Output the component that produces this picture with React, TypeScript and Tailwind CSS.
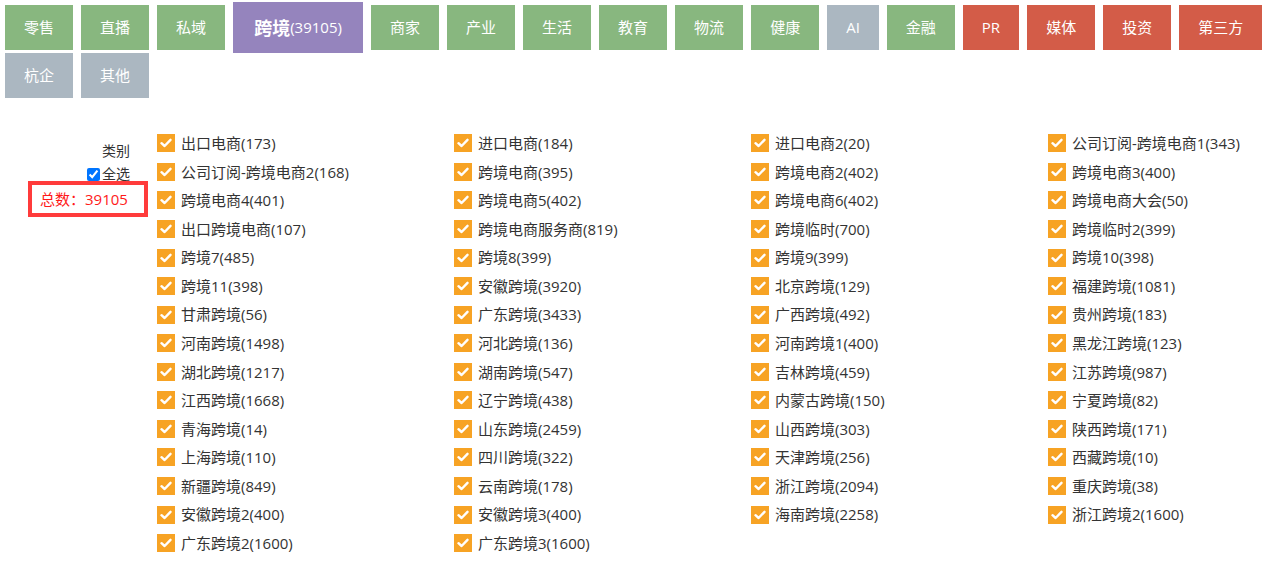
import React from "react";

type Btn = { label: string; color: "green" | "gray" | "red" };

const buttons: Btn[] = [
  { label: "零售", color: "green" },
  { label: "直播", color: "green" },
  { label: "私域", color: "green" },
  { label: "__active__", color: "green" },
  { label: "商家", color: "green" },
  { label: "产业", color: "green" },
  { label: "生活", color: "green" },
  { label: "教育", color: "green" },
  { label: "物流", color: "green" },
  { label: "健康", color: "green" },
  { label: "AI", color: "gray" },
  { label: "金融", color: "green" },
  { label: "PR", color: "red" },
  { label: "媒体", color: "red" },
  { label: "投资", color: "red" },
  { label: "第三方", color: "red" },
  { label: "杭企", color: "gray" },
  { label: "其他", color: "gray" },
];

const colorClass: Record<Btn["color"], string> = {
  green: "bg-[#88b77f]",
  gray: "bg-[#abb7c1]",
  red: "bg-[#d35c48]",
};

const items = [
  "出口电商(173)", "进口电商(184)", "进口电商2(20)", "公司订阅-跨境电商1(343)",
  "公司订阅-跨境电商2(168)", "跨境电商(395)", "跨境电商2(402)", "跨境电商3(400)",
  "跨境电商4(401)", "跨境电商5(402)", "跨境电商6(402)", "跨境电商大会(50)",
  "出口跨境电商(107)", "跨境电商服务商(819)", "跨境临时(700)", "跨境临时2(399)",
  "跨境7(485)", "跨境8(399)", "跨境9(399)", "跨境10(398)",
  "跨境11(398)", "安徽跨境(3920)", "北京跨境(129)", "福建跨境(1081)",
  "甘肃跨境(56)", "广东跨境(3433)", "广西跨境(492)", "贵州跨境(183)",
  "河南跨境(1498)", "河北跨境(136)", "河南跨境1(400)", "黑龙江跨境(123)",
  "湖北跨境(1217)", "湖南跨境(547)", "吉林跨境(459)", "江苏跨境(987)",
  "江西跨境(1668)", "辽宁跨境(438)", "内蒙古跨境(150)", "宁夏跨境(82)",
  "青海跨境(14)", "山东跨境(2459)", "山西跨境(303)", "陕西跨境(171)",
  "上海跨境(110)", "四川跨境(322)", "天津跨境(256)", "西藏跨境(10)",
  "新疆跨境(849)", "云南跨境(178)", "浙江跨境(2094)", "重庆跨境(38)",
  "安徽跨境2(400)", "安徽跨境3(400)", "海南跨境(2258)", "浙江跨境2(1600)",
  "广东跨境2(1600)", "广东跨境3(1600)",
];

const font = "font-['Open_Sans','Noto_Sans_CJK_SC',sans-serif]";

function Check() {
  return (
    <span className="flex h-[18px] w-[18px] shrink-0 items-center justify-center bg-[#f7a324]">
      <svg width="12" height="10" viewBox="0 0 12 10" fill="none">
        <path d="M1.5 5.2 L4.6 8 L10.5 1.8" stroke="white" strokeWidth="2.4" strokeLinecap="round" strokeLinejoin="round" />
      </svg>
    </span>
  );
}

export default function App() {
  return (
    <div className={`${font} min-h-[566px] bg-white text-[#333]`}>
      <div className="flex flex-wrap items-center gap-x-[8px] pl-[5px] pt-[2px]">
        {buttons.map((b, i) =>
          b.label === "__active__" ? (
            <div
              key={i}
              className="flex h-[51px] w-[130px] items-center justify-center bg-[#9584bd] text-white"
            >
              <span className="text-[18px] font-bold leading-none">跨境</span>
              <span className="text-[15px] leading-none">(39105)</span>
            </div>
          ) : (
            <div
              key={i}
              className={`flex h-[45px] items-center justify-center px-[19px] text-[15px] text-white ${colorClass[b.color]}`}
            >
              {b.label}
            </div>
          )
        )}
      </div>

      <div className="mt-[31px] flex">
        <div className="flex w-[148px] shrink-0 flex-col items-end pt-[12px] text-[14px]">
          <div className="mr-[18px] h-[20px] leading-[20px]">类别</div>
          <label className="mr-[18px] mt-[5px] flex h-[16px] items-center leading-[16px]">
            <input type="checkbox" defaultChecked className="m-0 mr-[2px] h-[13px] w-[13px]" />
            全选
          </label>
          <div className="mt-[-1px] flex h-[36px] w-[120px] items-center border-[4px] border-[#ff3b3b] pl-[8px] text-[15px] text-[#ff1a1a]">
            总数：39105
          </div>
        </div>
        <div className="ml-[9px] grid flex-1 grid-cols-[297px_297px_297px_1fr]">
          {items.map((t, i) => (
            <div key={i} className="flex h-[28.57px] items-center gap-[6px] whitespace-nowrap text-[15px]">
              <Check />
              <span>{t}</span>
            </div>
          ))}
        </div>
      </div>
    </div>
  );
}
